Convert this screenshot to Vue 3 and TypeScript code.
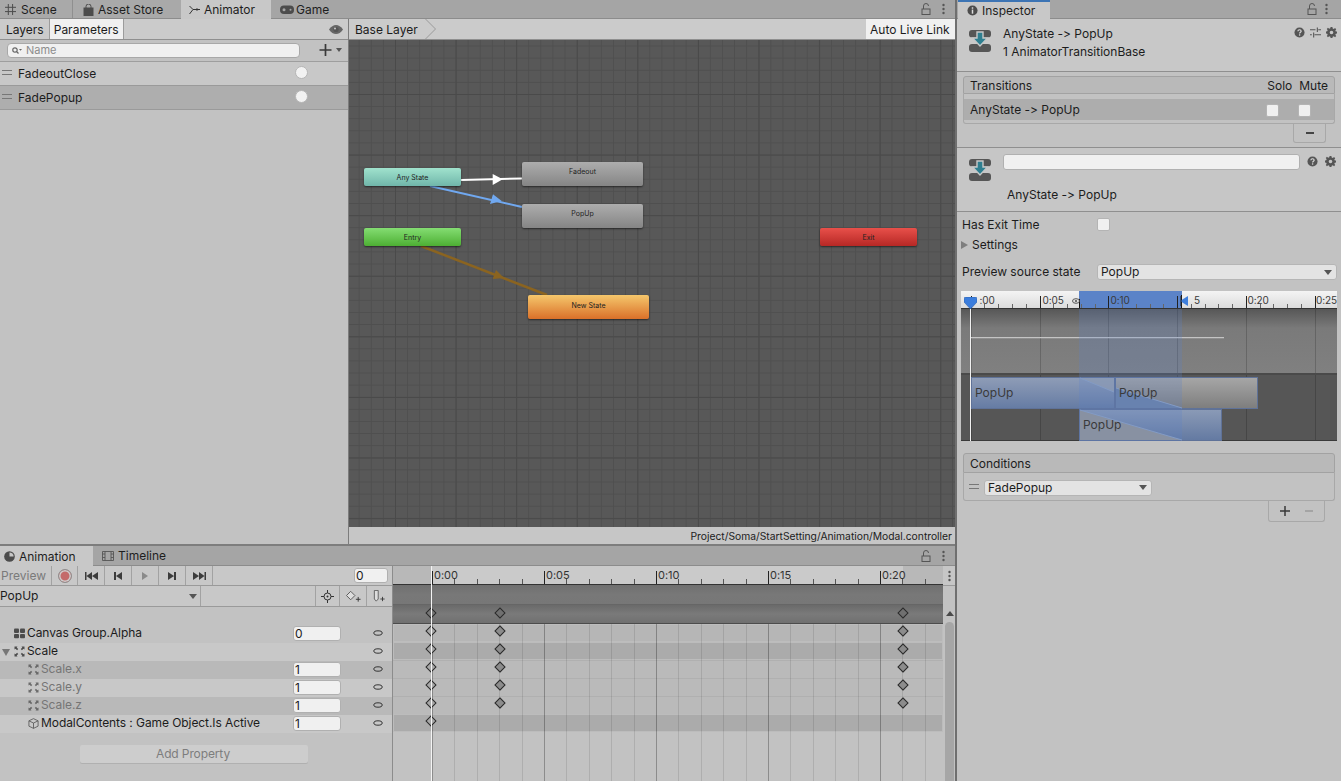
<script setup lang="ts">
const tx = (s: number) => 432 - 393 + s * 22.4
const rulerTicks: { left: number; major: boolean }[] = []
for (let i = 0; i <= 22; i++) {
  rulerTicks.push({ left: tx(i), major: i % 5 === 0 })
}
const rulerLabels = ['0:00', '0:05', '0:10', '0:15', '0:20'].map((t, i) => ({ t, left: tx(i * 5) + 2 }))
const keyX = [431 - 393, 499.5 - 393, 902.5 - 393]
const rows = [
  { name: 'Canvas Group.Alpha', icon: 'grid', val: '0', tone: 'r1', indent: 1, dim: false, keys: 3, track: 'tr-a' },
  { name: 'Scale', icon: 'scale', val: '', tone: 'r2', indent: 1, dim: false, keys: 3, caret: true, track: 'tr-b' },
  { name: 'Scale.x', icon: 'scale', val: '1', tone: 'r3', indent: 2, dim: true, keys: 3, track: 'tr-c' },
  { name: 'Scale.y', icon: 'scale', val: '1', tone: 'r2', indent: 2, dim: true, keys: 3, track: 'tr-c' },
  { name: 'Scale.z', icon: 'scale', val: '1', tone: 'r3', indent: 2, dim: true, keys: 3, track: 'tr-c' },
  { name: 'ModalContents : Game Object.Is Active', icon: 'cube', val: '1', tone: 'r2', indent: 2, dim: false, keys: 1, track: 'tr-b' },
]
const previewTicks = [0, 1, 2, 3, 4, 5].map((i) => 9.7 + i * 68.8)
const previewLabels = [
  { t: ':00', left: 18.5 },
  { t: '0:05', left: 81.5 },
  { t: '0:10', left: 149.5 },
  { t: '5', left: 233 },
  { t: '0:20', left: 286.5 },
  { t: '0:25', left: 355 },
]
const previewMinor: number[] = []
for (let i = 0; i < 26; i++) if (i % 5 !== 0) previewMinor.push(9.7 + i * 13.76)
const gridLines = [] as number[]
for (let i = 0; i <= 22; i++) gridLines.push(tx(i))
</script>

<template>
  <div class="app">
    <svg class="defs" aria-hidden="true">
      <symbol id="trans" viewBox="0 0 22 22">
        <rect x="0" y="0" width="22" height="7.5" rx="3" fill="#565656" />
        <path d="M0 17a3 3 0 0 1 3-3h16a3 3 0 0 1 3 3v2a3 3 0 0 1-3 3H3a3 3 0 0 1-3-3z" fill="#565656" />
        <path d="M8 2h6v6h4.5L11 16 3.5 8H8z" fill="#2f7f90" stroke="#c8c8c8" stroke-width="1.4" />
      </symbol>
      <symbol id="gear" viewBox="0 0 12 12">
        <path d="M5 0h2l.3 1.6 1.2.5L9.9 1.2l1.2 1.2-.9 1.4.5 1.2L12 5v2l-1.3.3-.5 1.2.9 1.4-1.2 1.2-1.4-.9-1.2.5L7 12H5l-.3-1.3-1.2-.5-1.4.9-1.2-1.2.9-1.4-.5-1.2L0 7V5l1.3-.3.5-1.2-.9-1.4 1.2-1.2 1.4.9 1.2-.5zM6 4a2 2 0 1 0 0 4 2 2 0 0 0 0-4z" fill="#555" fill-rule="evenodd" />
      </symbol>
      <symbol id="help" viewBox="0 0 12 12">
        <circle cx="6" cy="6" r="5.5" fill="#555" />
        <path d="M4.2 4.6C4.3 3.5 5 3 6 3s1.8.6 1.8 1.5c0 1.3-1.6 1.3-1.6 2.5" fill="none" stroke="#ddd" stroke-width="1.3" />
        <rect x="5.4" y="8" width="1.4" height="1.4" fill="#ddd" />
      </symbol>
      <symbol id="sliders" viewBox="0 0 12 12">
        <path d="M0 3h6M9 3h3M8 .5v5M0 8.5h2M5 8.5h7M4 6v5.5" stroke="#555" stroke-width="1.2" fill="none" />
      </symbol>
      <symbol id="lock" viewBox="0 0 10 12">
        <rect x="1" y="6" width="8" height="5.5" fill="none" stroke="#555" />
        <path d="M2.5 6V3a2.5 2.5 0 0 1 5 0" fill="none" stroke="#555" />
      </symbol>
      <symbol id="kebab" viewBox="0 0 3 12">
        <circle cx="1.5" cy="2" r="1.2" fill="#555" />
        <circle cx="1.5" cy="6" r="1.2" fill="#555" />
        <circle cx="1.5" cy="10" r="1.2" fill="#555" />
      </symbol>
      <symbol id="eyelet" viewBox="0 0 10 6">
        <ellipse cx="5" cy="3" rx="4.2" ry="2.2" fill="none" stroke="#333" />
      </symbol>
      <symbol id="grid" viewBox="0 0 11 10">
        <rect x="0" y="0" width="5" height="4.4" rx="1" fill="#4c4c4c" />
        <rect x="6" y="0" width="5" height="4.4" rx="1" fill="#4c4c4c" />
        <rect x="0" y="5.4" width="5" height="4.4" rx="1" fill="#4c4c4c" />
        <rect x="6" y="5.4" width="5" height="4.4" rx="1" fill="#4c4c4c" />
      </symbol>
      <symbol id="scale" viewBox="0 0 11 11">
        <path d="M.5.5h3l-.8 1 1.5 1.6-1.1 1.1-1.6-1.5-1 .8zM10.500.5v3l-1-.8-1.600 1.500-1.100-1.100 1.500-1.600-.8-1zM.5 10.500v-3l1 .8 1.600-1.500 1.100 1.100-1.500 1.600.8 1zM10.500 10.500h-3l.8-1-1.500-1.600 1.100-1.100 1.600 1.500 1-.8z" fill="#4c4c4c" />
      </symbol>
      <symbol id="cube" viewBox="0 0 12 12">
        <path d="M6 .7l5 2.4v5.800l-5 2.400-5-2.400V3.100zM1 3.100l5 2.400 5-2.400M6 5.500v5.800" fill="none" stroke="#555" stroke-width=".9" />
      </symbol>
    </svg>

    <div class="left">
      <section class="top-panel">
        <div class="tabbar">
          <div class="tab tab-scene">
            <svg class="ti" viewBox="0 0 11 11"><path d="M3.300 0v11M7.600 0v11M0 3.300h11M0 7.600h11" stroke="#4c4c4c" stroke-width="1" /></svg>
            <span>Scene</span>
          </div>
          <div class="tab tab-store">
            <svg class="ti tall" viewBox="0 0 11 12"><path d="M.5 3.500h10v8.500H.5z" fill="#4c4c4c" /><path d="M3 5V2.500a2.500 2.500 0 0 1 5 0V5" fill="none" stroke="#4c4c4c" /></svg>
            <span>Asset Store</span>
          </div>
          <div class="tab tab-animator active">
            <svg class="ti" viewBox="0 0 11 9"><path d="M.5 0L4 3.500h7M.5 8L4 3.500" fill="none" stroke="#333" /><path d="M7.500 2L10 3.500 7.500 5z" fill="#333" /></svg>
            <span>Animator</span>
          </div>
          <div class="tab tab-game">
            <svg class="ti wide" viewBox="0 0 14 9"><rect x="0" y="0" width="14" height="8.500" rx="4" fill="#4c4c4c" /><circle cx="4" cy="4.200" r="1.500" fill="#a5a5a5" /><circle cx="10.500" cy="4.200" r="1" fill="#a5a5a5" /></svg>
            <span>Game</span>
          </div>
          <div class="spacer"></div>
          <svg class="bar-ic lock"><use href="#lock" /></svg>
          <svg class="bar-ic kebab"><use href="#kebab" /></svg>
        </div>

        <div class="workspace">
          <aside class="params">
            <div class="subtabs">
              <div class="subtab">Layers</div>
              <div class="subtab on">Parameters</div>
              <div class="spacer"></div>
              <svg class="eye" viewBox="0 0 14 9"><path d="M0 4.500C2 1.500 4.500 0 7 0s5 1.500 7 4.500C12 7.500 9.500 9 7 9S2 7.500 0 4.500z" fill="#666" /><circle cx="7" cy="4.500" r="2.600" fill="#555" /><circle cx="6" cy="3.600" r="1" fill="#cbcbcb" /></svg>
            </div>
            <div class="searchrow">
              <div class="search">
                <svg class="mag" viewBox="0 0 10 7"><circle cx="3" cy="3" r="2.200" fill="none" stroke="#666" stroke-width="1.200" /><path d="M4.500 4.500L6.500 6.500" stroke="#666" stroke-width="1.200" /><path d="M7 2h3L8.500 3.700z" fill="#666" /></svg>
                <span>Name</span>
              </div>
              <div class="plusdrop">
                <svg class="plus" viewBox="0 0 12 12"><path d="M6 0v12M0 6h12" stroke="#3a3a3a" stroke-width="1.700" /></svg>
                <i class="caret-s"></i>
              </div>
            </div>
            <div class="param">
              <i class="handle"></i><span>FadeoutClose</span><b class="dot"></b>
            </div>
            <div class="param sel">
              <i class="handle"></i><span>FadePopup</span><b class="dot"></b>
            </div>
          </aside>

          <div class="graphcol">
            <div class="crumbs">
              <div class="crumb">Base Layer</div>
              <svg class="chev" viewBox="0 0 11 20"><path d="M.5 0l10 10-10 10" fill="none" stroke="#9a9a9a" /></svg>
              <div class="spacer"></div>
              <div class="autolink">Auto Live Link</div>
            </div>
            <div class="graph">
              <svg class="edges" viewBox="0 0 606 487">
                <path d="M112 140L173 138.500" stroke="#fff" stroke-width="2" />
                <path d="M143.700 134l10 5.300-10 5.700z" fill="#fff" />
                <path d="M81 146L173 167" stroke="#70a8f0" stroke-width="2" />
                <path d="M144 154.300l8.700 6.700-11.700 3z" fill="#70a8f0" />
                <path d="M72 206L198 255" stroke="#8b6420" stroke-width="2.500" />
                <path d="M147 230l8 8-11.300 1z" fill="#8b6420" />
              </svg>
              <div class="node any">Any State</div>
              <div class="node fadeout">Fadeout</div>
              <div class="node popup">PopUp</div>
              <div class="node entry">Entry</div>
              <div class="node newstate">New State</div>
              <div class="node exit">Exit</div>
            </div>
            <div class="status">Project/Soma/StartSetting/Animation/Modal.controller</div>
          </div>
        </div>
      </section>

      <section class="bottom-panel">
        <div class="tabbar b">
          <div class="tab tab-anim active">
            <svg class="ti" viewBox="0 0 12 12"><circle cx="6" cy="6" r="5.800" fill="#4c4c4c" /><path d="M6 1.500V6h4.500A4.500 4.500 0 0 0 6 1.500z" fill="#c8c8c8" /></svg>
            <span>Animation</span>
          </div>
          <div class="tab tab-time">
            <svg class="ti wide" viewBox="0 0 12 10"><path d="M.5.500h11v9H.500zM3 .500v9M9 .500v9M.5 3H3M.5 6.500H3M9 3h2.500M9 6.500h2.500" fill="none" stroke="#555" stroke-width=".9" /></svg>
            <span>Timeline</span>
          </div>
          <div class="spacer"></div>
          <svg class="bar-ic lock"><use href="#lock" /></svg>
          <svg class="bar-ic kebab"><use href="#kebab" /></svg>
        </div>
        <div class="animbody">
          <div class="animleft">
            <div class="tool1">
              <div class="cell preview">Preview</div>
              <div class="cell c26 rec"><b></b></div>
              <div class="cell c27">
                <svg viewBox="0 0 13 8"><path d="M0 0h1.500v8H0zM7 0v8L1.500 4zM13 0v8L7 4z" fill="#3c3c3c" /></svg>
              </div>
              <div class="cell c27">
                <svg class="n" viewBox="0 0 8 8"><path d="M0 0h2v8H0zM8 0v8L2 4z" fill="#3c3c3c" /></svg>
              </div>
              <div class="cell c27">
                <svg class="n" viewBox="0 0 8 8"><path d="M1 0l6 4-6 4z" fill="#8a8a8a" /></svg>
              </div>
              <div class="cell c27">
                <svg class="n" viewBox="0 0 8 8"><path d="M6 0h2v8H6zM0 0v8l6-4z" fill="#3c3c3c" /></svg>
              </div>
              <div class="cell c27">
                <svg viewBox="0 0 13 8"><path d="M11.500 0H13v8h-1.500zM0 0v8l6-4zM6 0v8l5.500-4z" fill="#3c3c3c" /></svg>
              </div>
              <div class="spacer"></div>
              <div class="field frame">0</div>
            </div>
            <div class="tool2">
              <div class="clipdrop"><span>PopUp</span><i class="caret-s"></i></div>
              <div class="blank"></div>
              <div class="tbtn w24">
                <svg viewBox="0 0 13 13"><path d="M6.500 0v13M0 6.500h13" stroke="#333" /><circle cx="6.500" cy="6.500" r="3.500" fill="#cbcbcb" stroke="#333" /><circle cx="6.500" cy="6.500" r="1" fill="#333" /></svg>
              </div>
              <div class="tbtn w27">
                <svg class="k" viewBox="0 0 16 12"><path d="M5 1l4.500 4.500L5 10 .5 5.500z" fill="#ddd" stroke="#555" /><path d="M13 7v5M10.500 9.500h5" stroke="#333" /></svg>
              </div>
              <div class="tbtn w26">
                <svg class="k" viewBox="0 0 14 14"><path d="M1 .5h4.500v10L3.200 13 1 10.500z" fill="#ddd" stroke="#555" /><path d="M10.500 8v5M8 10.500h5" stroke="#333" /></svg>
              </div>
            </div>
            <div class="proprows">
              <div v-for="r in rows" :key="r.name" class="prop" :class="r.tone">
                <svg v-if="r.caret" class="tri" viewBox="0 0 8 7"><path d="M0 0h8L4 7z" fill="#777" /></svg>
                <span class="ind" :class="'ind' + r.indent"></span>
                <svg class="picon" :class="{ faded: r.dim }"><use :href="'#' + r.icon" /></svg>
                <span class="pname" :class="{ dim: r.dim }">{{ r.name }}</span>
                <div v-if="r.val" class="field pval">{{ r.val }}</div>
                <svg class="eyelet"><use href="#eyelet" /></svg>
              </div>
            </div>
            <div class="addwrap"><div class="addprop">Add Property</div></div>
          </div>

          <div class="animright">
            <div class="timeline">
              <div class="tl-ruler">
                <i class="shade sl"></i><i class="shade sr"></i>
                <i v-for="t in rulerTicks" :key="t.left" class="tick" :class="{ maj: t.major }" :style="{ left: t.left + 'px' }"></i>
                <span v-for="l in rulerLabels" :key="l.t" class="tlabel" :style="{ left: l.left + 'px' }">{{ l.t }}</span>
              </div>
              <div class="band band1"></div>
              <div class="band band2">
                <i v-for="(k, i) in keyX" :key="k" class="key" :class="{ hollow: i === 0 }" :style="{ left: k + 'px' }"></i>
              </div>
              <div class="tracks">
                <i v-for="(g, i) in gridLines" :key="g" class="gl" :class="{ gm: i % 5 === 0 }" :style="{ left: g + 'px' }"></i>
                <div v-for="r in rows" :key="r.name" class="track" :class="r.track">
                  <i v-for="(k, i) in keyX.slice(0, r.keys === 1 ? 1 : 3)" :key="k" class="key" :class="{ hollow: i === 0 }" :style="{ left: k + 'px' }"></i>
                </div>
              </div>
              <i class="cursor"></i>
            </div>
            <div class="scrollcol">
              <svg class="kb" viewBox="0 0 3 12"><use href="#kebab" /></svg>
              <div class="scrolltop"></div>
              <i class="uparrow"></i>
              <div class="thumb"></div>
            </div>
          </div>
        </div>
      </section>
    </div>

    <aside class="inspector">
      <div class="tabbar ins">
        <div class="tab tab-ins active">
          <svg class="ti" viewBox="0 0 12 12"><circle cx="6" cy="6" r="5.500" fill="#4c4c4c" /><rect x="5.200" y="2.500" width="1.600" height="1.600" fill="#ddd" /><rect x="5.200" y="5" width="1.600" height="4.500" fill="#ddd" /></svg>
          <span>Inspector</span>
        </div>
        <div class="spacer"></div>
        <svg class="bar-ic lock l3"><use href="#lock" /></svg>
        <svg class="bar-ic kebab k3"><use href="#kebab" /></svg>
      </div>

      <div class="ins-head">
        <svg class="ticon"><use href="#trans" /></svg>
        <div class="ins-titles">
          <div>AnyState -&gt; PopUp</div>
          <div>1 AnimatorTransitionBase</div>
        </div>
        <div class="spacer"></div>
        <svg class="mini"><use href="#help" /></svg>
        <svg class="mini"><use href="#sliders" /></svg>
        <svg class="mini"><use href="#gear" /></svg>
      </div>

      <div class="ins-trans">
        <div class="listhead">
          <span>Transitions</span><div class="spacer"></div><span class="solo">Solo</span><span class="mute">Mute</span>
        </div>
        <div class="listbody">
          <div class="listrow">
            <span>AnyState -&gt; PopUp</span><div class="spacer"></div>
            <b class="check c1"></b><b class="check c2"></b>
          </div>
        </div>
        <div class="footer one"><div class="ftab fminus"><i class="minus"></i></div></div>
      </div>

      <div class="ins-name">
        <div class="nm-row">
          <svg class="ticon"><use href="#trans" /></svg>
          <div class="nm-input"></div>
          <svg class="mini"><use href="#help" /></svg>
          <svg class="mini"><use href="#gear" /></svg>
        </div>
        <div class="nm-label">AnyState -&gt; PopUp</div>
      </div>

      <div class="ins-props">
        <div class="line exit-line"><span class="lab">Has Exit Time</span><b class="check"></b></div>
        <div class="line settings"><i class="tri-r"></i><span>Settings</span></div>
        <div class="line source">
          <span class="lab">Preview source state</span>
          <div class="drop wide-drop"><span>PopUp</span><i class="caret-s"></i></div>
        </div>

        <div class="pv">
          <div class="pv-ruler">
            <i class="pv-sel"></i>
            <i v-for="m in previewMinor" :key="m" class="pv-minor" :style="{ left: m + 'px' }"></i>
            <i v-for="t in previewTicks" :key="t" class="pv-major" :style="{ left: t + 'px' }"></i>
            <i class="pv-edge e1"></i><i class="pv-edge e2"></i>
            <span v-for="l in previewLabels" :key="l.t" class="pv-label" :style="{ left: l.left + 'px' }">{{ l.t }}</span>
            <svg class="pv-eye" viewBox="0 0 8 6"><ellipse cx="4" cy="3" rx="3.500" ry="2.300" fill="none" stroke="#555" /><circle cx="4" cy="3" r="1.100" fill="#555" /></svg>
            <svg class="pv-end" viewBox="0 0 8 10"><path d="M8 0v10L0 5z" fill="#3f7fdc" /><path d="M1 0v10" stroke="#222" /></svg>
            <svg class="pv-head" viewBox="0 0 13 12"><path d="M2 0h9a2 2 0 0 1 2 2v3l-6.500 7L0 5V2a2 2 0 0 1 2-2z" fill="#3b7ddc" stroke="#2c5fa8" stroke-width=".6" /></svg>
          </div>
          <div class="pv-upper">
            <i v-for="t in previewTicks" :key="t" class="pv-gl" :style="{ left: t + 'px' }"></i>
            <i class="pv-curve"></i>
          </div>
          <div class="pv-lower">
            <i v-for="t in previewTicks" :key="t" class="pv-gl" :style="{ left: t + 'px' }"></i>
            <div class="clip clip1"><span>PopUp</span></div>
            <div class="clip clip2"><span>PopUp</span></div>
            <div class="clip clip3"><span>PopUp</span></div>
            <svg class="clipdiag" viewBox="0 0 376 66" preserveAspectRatio="none">
              <path d="M119 3L153 3L153 17z" fill="#9ea4ae" opacity=".75" />
              <path d="M155 13L221 33L155 33z" fill="#6c82a8" />
              <path d="M119 35L221 65L119 65z" fill="#969696" />
              <path d="M119 3L153 17M155 13L221 33M119 35L221 65" stroke="#8fa3c4" stroke-width="1" fill="none" />
            </svg>
          </div>
          <i class="pv-overlay"></i>
          <i class="pv-cursor"></i>
        </div>

        <div class="listhead cond"><span>Conditions</span></div>
        <div class="listbody condbody">
          <i class="handle h2"></i>
          <div class="drop cond-drop"><span>FadePopup</span><i class="caret-s"></i></div>
        </div>
        <div class="footer two">
          <div class="ftab fpm">
            <svg class="pm" viewBox="0 0 10 10"><path d="M5 0v10M0 5h10" stroke="#3a3a3a" stroke-width="1.500" /></svg>
            <svg class="pm" viewBox="0 0 10 10"><path d="M1 5h8" stroke="#9a9a9a" stroke-width="1.500" /></svg>
          </div>
        </div>
      </div>
    </aside>
  </div>
</template>

<style scoped>
.app {
  display: flex;
  width: 1341px;
  height: 781px;
  overflow: hidden;
  background: #c2c2c2;
  color: #1c1c1c;
  font-family: Inter, "Noto Sans", "Liberation Sans", sans-serif;
  font-size: 12px;
  line-height: 14px;
  font-feature-settings: "calt" 0, "liga" 0;
  font-variant-ligatures: none;
}
.defs { position: absolute; width: 0; height: 0; }
.spacer { flex: 1; }
.left { width: 955px; display: flex; flex-direction: column; border-right: 2px solid #6f6f6f; }
.top-panel { height: 545px; display: flex; flex-direction: column; }
.tabbar { height: 19px; flex: none; display: flex; align-items: stretch; background: #a5a5a5; border-bottom: 1px solid #8c8c8c; box-sizing: border-box; }
.tab { display: flex; align-items: center; gap: 5px; box-sizing: border-box; color: #1e1e1e; padding-top: 1px; }
.tab.active { background: #c8c8c8; margin-bottom: -1px; z-index: 1; }
.ti { width: 11px; height: 11px; flex: none; }
.ti.tall { height: 12px; }
.ti.wide { width: 14px; height: 10px; }
.tab-scene { width: 73px; padding-left: 5px; background: #a9a9a9; border-right: 1px solid #8f8f8f; }
.tab-store { width: 108px; padding-left: 10px; gap: 4px; background: #a9a9a9; }
.tab-animator { width: 90px; padding-left: 8px; gap: 4px; }
.tab-game { padding-left: 9px; gap: 2px; }
.bar-ic { flex: none; align-self: center; }
.lock { width: 10px; height: 12px; margin-right: 11px; }
.kebab { width: 3px; height: 12px; margin-right: 10px; }
.workspace { flex: 1; display: flex; min-height: 0; }

.params { width: 349px; box-sizing: border-box; border-right: 1px solid #7c7c7c; background: #c2c2c2; display: flex; flex-direction: column; }
.subtabs { height: 21px; flex: none; display: flex; align-items: stretch; background: #cbcbcb; border-bottom: 1px solid #8f8f8f; box-sizing: border-box; padding-left: 1px; }
.subtab { padding: 2px 5px 0; display: flex; align-items: center; border-right: 1px solid #9c9c9c; }
.subtab.on { background: #f0f0f0; padding: 2px 5px 0 4px; width: 74px; box-sizing: border-box; }
.eye { width: 14px; height: 9px; align-self: center; margin-right: 5px; margin-top: 1px; }
.searchrow { height: 22px; flex: none; display: flex; align-items: center; background: #c2c2c2; border-bottom: 1px solid #9e9e9e; box-sizing: border-box; padding: 0 0 1px 7px; }
.search { width: 293px; height: 15px; border: 1px solid #a8a8a8; border-radius: 4px; background: #f0f0f0; color: #8c8c8c; font-size: 11px; display: flex; align-items: center; box-sizing: border-box; padding-left: 4px; gap: 4px; }
.mag { width: 10px; height: 7px; }
.plusdrop { display: flex; align-items: center; margin-left: 19px; gap: 4px; }
.plus { width: 13px; height: 12px; }
.caret-s { display: block; width: 0; height: 0; border-left: 4px solid transparent; border-right: 4px solid transparent; border-top: 5px solid #555; }
.plusdrop .caret-s { border-left-width: 3.5px; border-right-width: 3.5px; border-top-width: 4px; }
.param { height: 24px; flex: none; box-sizing: border-box; display: flex; align-items: center; background: #c8c8c8; border-bottom: 1px solid #9a9a9a; padding-left: 2px; position: relative; }
.param.sel { background: #aeaeae; }
.param span { margin-left: 6px; }
.handle { display: block; width: 10px; height: 5px; border-top: 1px solid #777; border-bottom: 1px solid #777; box-sizing: border-box; margin-top: -3px; margin-left: 0; }
.dot { position: absolute; left: 295px; top: 4px; width: 13px; height: 13px; border-radius: 50%; background: #f2f2f2; border: 1px solid #b5b5b5; box-sizing: border-box; }

.graphcol { flex: 1; display: flex; flex-direction: column; min-width: 0; }
.crumbs { height: 21px; flex: none; display: flex; align-items: stretch; background: #cbcbcb; border-bottom: 1px solid #8f8f8f; box-sizing: border-box; }
.crumb { padding: 2px 0 0 6px; display: flex; align-items: center; }
.chev { width: 11px; height: 20px; margin-left: 7px; }
.autolink { width: 89px; box-sizing: border-box; background: #f0f0f0; display: flex; align-items: center; padding: 2px 0 0 4px; font-size: 12px; }
.graph {
  flex: 1;
  position: relative;
  min-height: 0;
  overflow: hidden;
  background-color: #585858;
  background-image:
    linear-gradient(to right, #4a4a4a 1px, transparent 1px),
    linear-gradient(to bottom, #4a4a4a 1px, transparent 1px),
    linear-gradient(to right, #4f4f4f 1px, transparent 1px),
    linear-gradient(to bottom, #4f4f4f 1px, transparent 1px);
  background-size: 60.6px 60.6px, 60.6px 60.6px, 12.12px 12.12px, 12.12px 12.12px;
  background-position: 46px 54px, 46px 54px, 46px 54px, 46px 54px;
}
.edges { position: absolute; left: 0; top: 0; width: 606px; height: 487px; }
.node { position: absolute; display: flex; align-items: center; justify-content: center; font-size: 7px; border-radius: 2px; color: #222; box-shadow: 0 1px 2px rgba(0, 0, 0, .55); box-sizing: border-box; }
.any { left: 15px; top: 128px; width: 97px; height: 18px; padding-top: 1px; background: linear-gradient(#a0e2cd, #70b6aa); }
.fadeout { left: 173px; top: 122px; width: 121px; height: 24px; padding-bottom: 4px; background: linear-gradient(#adadad, #858585); }
.popup { left: 173px; top: 164px; width: 121px; height: 24px; padding-bottom: 4px; background: linear-gradient(#adadad, #858585); }
.entry { left: 15px; top: 188px; width: 97px; height: 18px; padding-top: 1px; background: linear-gradient(#84dd72, #4daf33); }
.newstate { left: 179px; top: 255px; width: 121px; height: 24px; padding-bottom: 2px; background: linear-gradient(#f5c76c, #da7029); }
.exit { left: 471px; top: 188px; width: 97px; height: 18px; padding-top: 1px; background: linear-gradient(#e8504a, #b62825); }
.status { height: 18px; flex: none; background: #c6c6c6; text-align: right; padding-right: 3px; font-size: 10.3px; line-height: 18px; }

.bottom-panel { flex: 1; display: flex; flex-direction: column; min-height: 0; border-top: 2px solid #7d7d7d; margin-top: -1px; }
.tabbar.b { height: 20px; }
.tab-anim { width: 93px; padding-left: 4px; gap: 4px; }
.tab-time { padding-left: 9px; gap: 4px; }
.tab-time .ti.wide { width: 12px; height: 10px; }
.animbody { flex: 1; display: flex; min-height: 0; }
.animleft { width: 393px; flex: none; box-sizing: border-box; border-right: 1px solid #8c8c8c; background: #c2c2c2; display: flex; flex-direction: column; }
.tool1, .tool2 { flex: none; display: flex; align-items: stretch; background: #c8c8c8; border-bottom: 1px solid #9a9a9a; box-sizing: border-box; }
.tool1 { height: 20px; }
.tool2 { height: 21px; }
.cell { display: flex; align-items: center; justify-content: center; border-right: 1px solid #a2a2a2; box-sizing: border-box; flex: none; }
.cell svg { width: 13px; height: 8px; }
.cell svg.n { width: 8px; }
.preview { width: 52px; color: #7a7a7a; justify-content: flex-start; padding-left: 1px; }
.c26 { width: 26px; }
.c27 { width: 27px; }
.rec b { display: block; width: 14px; height: 14px; box-sizing: border-box; border-radius: 50%; border: 1px solid #8f8f8f; background: #c46a6a; box-shadow: inset 0 0 0 1.5px #cfcfcf; }
.field { background: #f0f0f0; border: 1px solid #b0b0b0; border-radius: 3px; box-sizing: border-box; display: flex; align-items: center; padding-left: 1px; }
.frame { width: 34px; height: 15px; align-self: center; margin-right: 4px; }
.clipdrop { width: 201px; flex: none; display: flex; align-items: center; justify-content: space-between; box-sizing: border-box; border-right: 1px solid #a2a2a2; padding-right: 3px; }
.blank { width: 114px; flex: none; }
.tbtn { display: flex; align-items: center; justify-content: center; border-left: 1px solid #a2a2a2; box-sizing: border-box; flex: none; }
.tbtn svg { width: 13px; height: 13px; }
.tbtn svg.k { width: 15px; height: 12px; }
.w24 { width: 24px; }
.w27 { width: 27px; }
.w26 { width: 26px; }
.proprows { margin-top: 18px; flex: none; }
.prop { height: 18px; display: flex; align-items: center; position: relative; box-sizing: border-box; padding-bottom: 2px; }
.r1 { background: #c2c2c2; }
.r2 { background: #c8c8c8; }
.r3 { background: #b9b9b9; }
.tri { position: absolute; left: 2px; top: 6px; width: 8px; height: 7px; }
.ind { display: block; flex: none; }
.ind1 { width: 14px; }
.ind2 { width: 28px; }
.picon { width: 11px; height: 11px; flex: none; }
.picon.faded { opacity: .75; }
.pname { margin-left: 2px; white-space: nowrap; letter-spacing: -.08px; }
.pname.dim { color: #757575; }
.pval { position: absolute; left: 293px; top: 1px; width: 48px; height: 15px; }
.eyelet { position: absolute; left: 373px; top: 5px; width: 10px; height: 6px; }
.addwrap { padding: 12px 0 0 80px; }
.addprop { width: 228px; height: 18px; background: #cdcdcd; border-radius: 2px; color: #7d7d7d; letter-spacing: -.12px; display: flex; align-items: center; justify-content: center; box-shadow: 0 1px 0 #b0b0b0; padding-right: 2px; box-sizing: border-box; }

.animright { flex: 1; display: flex; min-width: 0; }
.timeline { width: 550px; flex: none; position: relative; background: #c2c2c2; overflow: hidden; display: flex; flex-direction: column; }
.tl-ruler { height: 19px; flex: none; background: #cacaca; position: relative; border-bottom: 1px solid #333; box-sizing: border-box; }
.shade { position: absolute; top: 0; bottom: 0; background: #b8b8b8; }
.sl { left: 0; width: 38px; }
.sr { left: 510px; right: 0; }
.tick { position: absolute; bottom: 0; width: 1px; height: 5px; background: #555; }
.tick.maj { height: 13px; background: #222; }
.tlabel { position: absolute; top: 2px; font-size: 11px; line-height: 14px; color: #333; }
.band { flex: none; position: relative; }
.band1 { height: 20px; background: linear-gradient(#6f6f6f, #787878 50%, #777); border-bottom: 1px solid #666; box-sizing: border-box; }
.band2 { height: 19px; background: linear-gradient(#6a6a6a, #7a7a7a 50%, #707070); border-bottom: 1px solid #4c4c4c; box-sizing: border-box; }
.tracks { position: relative; flex: 1; background: #c2c2c2; }
.track { height: 18px; position: relative; box-sizing: border-box; }
.tr-a { background: #b6b6b6; box-shadow: inset 0 0 0 1px #bdbdbd; }
.tr-b { background: #ababab; box-shadow: inset 0 0 0 1px #bcbcbc; }
.tr-c { background: #bababa; box-shadow: inset 0 1px 0 #b0b0b0; }
.gl { position: absolute; top: 0; bottom: 0; width: 1px; background: rgba(0, 0, 0, .1); z-index: 1; }
.gl.gm { background: rgba(0, 0, 0, .28); }
.key { position: absolute; top: 50%; width: 8px; height: 8px; margin: -6px 0 0 -4px; transform: rotate(45deg); background: #8c8c8c; border: 1px solid #2a2a2a; box-sizing: border-box; z-index: 2; }
.key.hollow { background: #a8a8a8; }
.band2 .key { background: #707070; margin-top: -5px; }
.band2 .key.hollow { background: #777; }
.cursor { position: absolute; left: 37.5px; top: 0; bottom: 0; width: 1px; background: #f4f4f4; z-index: 3; }
.scrollcol { flex: 1; position: relative; background: #c2c2c2; }
.scrollcol .kb { position: absolute; left: 5px; top: 4px; width: 3px; height: 12px; }
.scrolltop { height: 20px; background: #c6c6c6; border-bottom: 1px solid #9a9a9a; box-sizing: border-box; }
.uparrow { position: absolute; left: 3px; top: 45px; width: 0; height: 0; border-left: 4px solid transparent; border-right: 4px solid transparent; border-bottom: 5px solid #4a4a4a; }
.thumb { position: absolute; left: 2px; top: 56px; width: 9px; bottom: 0; background: #a6a6a6; border-radius: 5px 5px 0 0; }

.inspector { flex: 1; display: flex; flex-direction: column; background: #c2c2c2; min-width: 0; }
.tabbar.ins { padding-left: 1px; }
.tab-ins { width: 92px; padding: 0 0 0 9px; gap: 4px; border-top: 2px solid #3c74b4; }
.l3 { margin-right: 8px; }
.k3 { margin-right: 13px; }
.ins-head { height: 53px; flex: none; box-sizing: border-box; display: flex; align-items: flex-start; background: #c8c8c8; border-bottom: 1px solid #8f8f8f; padding: 11px 4px 0 12px; gap: 5px; }
.ticon { width: 22px; height: 22px; flex: none; }
.ins-titles { margin-left: 7px; margin-top: -3px; display: flex; flex-direction: column; gap: 4px; }
.mini { width: 11px; height: 11px; flex: none; margin-top: -3px; }
.ins-trans { height: 76px; flex: none; box-sizing: border-box; border-bottom: 1px solid #8f8f8f; padding: 4px 6px 0 6px; }
.listhead { height: 18px; box-sizing: border-box; background: #b9b9b9; border: 1px solid #a2a2a2; border-radius: 3px 3px 0 0; display: flex; align-items: center; padding: 2px 6px 0 6px; }
.solo { margin-right: 7px; margin-left: 1px; }
.listbody { border: 1px solid #a8a8a8; border-top: 0; border-radius: 0 0 3px 3px; padding: 5px 0 3px; background: #c2c2c2; }
.listrow { height: 21px; background: #adadad; display: flex; align-items: center; padding-left: 6px; position: relative; }
.check { display: block; width: 13px; height: 13px; background: #f0f0f0; border: 1px solid #b4b4b4; border-radius: 2px; box-sizing: border-box; }
.listrow .check { margin-top: 2px; }
.c1 { margin-right: 19px; }
.c2 { margin-right: 23px; }
.footer { display: flex; justify-content: flex-end; }
.ftab { background: #c2c2c2; border: 1px solid #a8a8a8; border-top: 0; border-radius: 0 0 3px 3px; display: flex; align-items: center; justify-content: center; box-sizing: border-box; }
.fminus { width: 33px; height: 19px; margin-right: 9px; }
.minus { display: block; width: 8px; height: 2px; background: #444; }
.ins-name { height: 64px; flex: none; box-sizing: border-box; background: #c6c6c6; border-bottom: 1px solid #8f8f8f; padding: 6px 5px 0 12px; }
.nm-row { display: flex; align-items: flex-start; gap: 0; }
.nm-row .ticon { margin-top: 5px; }
.nm-input { width: 297px; height: 16px; margin-left: 12px; background: #f0f0f0; border: 1px solid #b0b0b0; border-radius: 3px; box-sizing: border-box; }
.nm-row .mini { margin-top: 2px; margin-left: 7px; }
.nm-label { margin: 7px 0 0 38px; }
.ins-props { flex: 1; padding: 0 4px; min-height: 0; }
.line { display: flex; align-items: center; }
.lab { width: 136px; flex: none; padding-left: 1px; box-sizing: border-box; }
.exit-line { height: 20px; margin-top: 3px; }
.exit-line .check { margin-top: -1px; }
.settings { height: 20px; gap: 4px; }
.tri-r { width: 0; height: 0; border-top: 4px solid transparent; border-bottom: 4px solid transparent; border-left: 7px solid #7f7f7f; }
.source { height: 18px; margin-top: 8px; }
.drop { height: 16px; background: #e3e3e3; border: 1px solid #b5b5b5; border-radius: 3px; box-sizing: border-box; display: flex; align-items: center; justify-content: space-between; padding: 0 4px 0 3px; }
.wide-drop { width: 240px; }
.pv { position: relative; width: 376px; height: 150px; margin-top: 10px; overflow: hidden; }
.pv-ruler { height: 18px; position: relative; background: linear-gradient(#f4f4f4, #dcdcdc); border-bottom: 1px solid #333; box-sizing: border-box; }
.pv-sel { position: absolute; left: 118px; width: 103px; top: 0; bottom: 0; background: #5b83c8; }
.pv-minor { position: absolute; bottom: 0; width: 1px; height: 4px; background: #666; }
.pv-major { position: absolute; bottom: 0; width: 1px; height: 12px; background: #222; }
.pv-edge { position: absolute; bottom: 0; width: 1px; height: 9px; background: #111; }
.e1 { left: 118px; }
.e2 { left: 220px; height: 13px; }
.pv-label { position: absolute; top: 2px; font-size: 10px; letter-spacing: -.1px; line-height: 14px; color: #3a3a3a; }
.pv-eye { position: absolute; left: 111px; top: 7px; width: 8px; height: 6px; }
.pv-end { position: absolute; left: 219px; top: 5px; width: 8px; height: 10px; }
.pv-head { position: absolute; left: 3px; top: 6px; width: 13px; height: 12px; }
.pv-upper { height: 66px; position: relative; background: linear-gradient(#575757, #7a7a7a 30%, #808080); border-bottom: 2px solid #4a4a4a; box-sizing: border-box; }
.pv-gl { position: absolute; top: 0; bottom: 0; width: 1px; background: rgba(0, 0, 0, .18); }
.pv-curve { position: absolute; left: 9px; top: 28px; width: 254px; height: 1px; background: #c4c4c4; box-shadow: 0 1px 0 rgba(255, 255, 255, .15); }
.pv-lower { height: 66px; position: relative; background: #565656; border-bottom: 1px solid #3a3a3a; box-sizing: border-box; }
.clip { position: absolute; box-sizing: border-box; color: #3a3a3a; padding-left: 3px; display: flex; align-items: center; height: 32px; border: 1px solid #5f7298; }
.clip span { position: relative; z-index: 2; }
.clip1 { left: 10px; top: 2px; width: 144px; background: linear-gradient(#8e9cb6, #667ca4); }
.clip2 { left: 154px; top: 2px; width: 143px; background: linear-gradient(#a6a6a6, #7e7e7e); }
.clip3 { left: 118px; top: 34px; width: 143px; height: 32px; background: linear-gradient(#8a9ab6, #647aa2); }
.clipdiag { position: absolute; left: 0; top: 0; width: 376px; height: 66px; }
.pv-overlay { position: absolute; left: 118px; width: 103px; top: 18px; bottom: 0; background: rgba(91, 131, 200, .24); }
.pv-cursor { position: absolute; left: 9px; top: 18px; bottom: 0; width: 1px; background: #f0f0f0; }
.cond { margin: 12px 2px 0; height: 20px; }
.condbody { margin: 0 2px; height: 28px; display: flex; align-items: center; padding: 0 0 0 5px; box-sizing: border-box; }
.h2 { margin: 0; }
.cond-drop { width: 168px; margin-left: 5px; margin-top: 2px; }
.two { margin-right: 12px; }
.fpm { width: 57px; height: 21px; gap: 14px; }
.pm { width: 10px; height: 10px; }
</style>

<style>
html, body { margin: 0; background: #c2c2c2; }
</style>
